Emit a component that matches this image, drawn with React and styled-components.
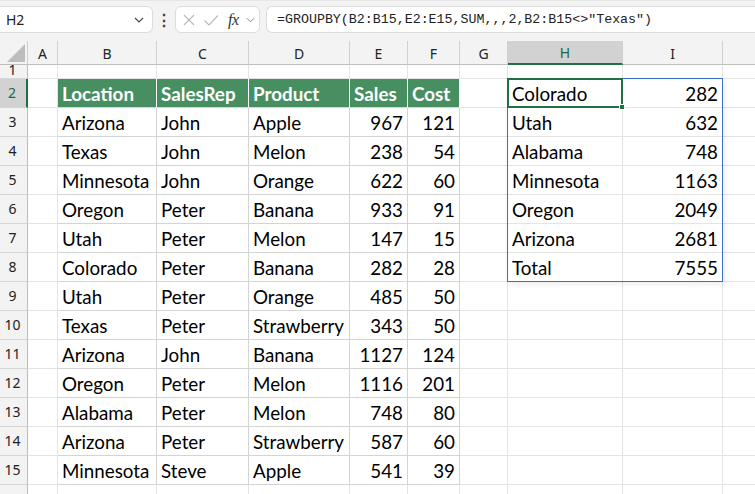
import React from 'react';
import styled, { createGlobalStyle } from 'styled-components';

const COLS = ['A', 'B', 'C', 'D', 'E', 'F', 'G', 'H', 'I', 'J'];
const WIDTHS = [30, 99, 92, 101, 58, 52, 48, 115, 100, 40];
const HEAD_W = 28;
const ROW_H = 29;
const ROW1_H = 14;

const header = ['Location', 'SalesRep', 'Product', 'Sales', 'Cost'];
const rows = [
    ['Arizona', 'John', 'Apple', 967, 121],
    ['Texas', 'John', 'Melon', 238, 54],
    ['Minnesota', 'John', 'Orange', 622, 60],
    ['Oregon', 'Peter', 'Banana', 933, 91],
    ['Utah', 'Peter', 'Melon', 147, 15],
    ['Colorado', 'Peter', 'Banana', 282, 28],
    ['Utah', 'Peter', 'Orange', 485, 50],
    ['Texas', 'Peter', 'Strawberry', 343, 50],
    ['Arizona', 'John', 'Banana', 1127, 124],
    ['Oregon', 'Peter', 'Melon', 1116, 201],
    ['Alabama', 'Peter', 'Melon', 748, 80],
    ['Arizona', 'Peter', 'Strawberry', 587, 60],
    ['Minnesota', 'Steve', 'Apple', 541, 39],
];
const spill = [
    ['Colorado', 282],
    ['Utah', 632],
    ['Alabama', 748],
    ['Minnesota', 1163],
    ['Oregon', 2049],
    ['Arizona', 2681],
    ['Total', 7555],
];

// build a map of cell values: key like "B3"
const cells = {};
header.forEach((h, i) => {
    cells[COLS[i + 1] + 2] = { v: h, head: true };
});
rows.forEach((r, ri) => {
    r.forEach((v, ci) => {
        cells[COLS[ci + 1] + (ri + 3)] = { v, num: typeof v === 'number' };
    });
});
spill.forEach((r, ri) => {
    cells['H' + (ri + 2)] = { v: r[0] };
    cells['I' + (ri + 2)] = { v: r[1], num: true };
});

const colLeft = (idx) => HEAD_W + WIDTHS.slice(0, idx).reduce((a, b) => a + b, 0);

export default function App() {
    const rowNums = Array.from({ length: 16 }, (_, i) => i + 1);
    const spillTop = 24 + ROW1_H;
    return (
        <>
            <GlobalStyle />
            <Page>
                <FormulaBar>
                    <NameBox>
                        <span>H2</span>
                        <Chevron viewBox="0 0 10 6">
                            <path d="M1 1 L5 5 L9 1" fill="none" stroke="#444" strokeWidth="1.1" />
                        </Chevron>
                    </NameBox>
                    <Dots>⋮</Dots>
                    <FxBox>
                        <svg width="14" height="14" viewBox="0 0 14 14">
                            <path d="M2 2 L12 12 M12 2 L2 12" stroke="#b8b8b8" strokeWidth="1.1" />
                        </svg>
                        <svg width="16" height="14" viewBox="0 0 16 14">
                            <path d="M1.5 7.5 L6 12 L15 2.5" fill="none" stroke="#b8b8b8" strokeWidth="1.1" />
                        </svg>
                        <Fx>fx</Fx>
                        <Chevron viewBox="0 0 10 6" style={{ width: 9 }}>
                            <path d="M1 1 L5 5 L9 1" fill="none" stroke="#777" strokeWidth="1" />
                        </Chevron>
                    </FxBox>
                    <FormulaInput>=GROUPBY(B2:B15,E2:E15,SUM,,,2,B2:B15&lt;&gt;"Texas")</FormulaInput>
                </FormulaBar>

                <SheetWrap>
                    <Sheet>
                        <Corner>
                            <svg width="18" height="18" viewBox="0 0 18 18">
                                <path d="M18 0 L18 18 L0 18 Z" fill="#bdbdbd" />
                            </svg>
                        </Corner>
                        {COLS.map((c) => (
                            <ColHead key={c} $active={c === 'H'}>
                                {c === 'J' ? '' : c}
                            </ColHead>
                        ))}
                        {rowNums.map((r) => (
                            <React.Fragment key={r}>
                                <RowHead $active={r === 2} $short={r === 1}>
                                    <span>{r}</span>
                                </RowHead>
                                {COLS.map((c) => {
                                    const cell = cells[c + r];
                                    const inTable =
                                        r >= 2 && r <= 15 && ['B', 'C', 'D', 'E', 'F'].includes(c);
                                    return (
                                        <Cell
                                            key={c}
                                            $head={cell && cell.head}
                                            $num={cell && cell.num}
                                            $table={inTable}
                                        >
                                            {cell ? cell.v : ''}
                                        </Cell>
                                    );
                                })}
                            </React.Fragment>
                        ))}
                    </Sheet>
                    <SpillBorder
                        style={{
                            left: colLeft(7) - 1,
                            top: spillTop - 1,
                            width: WIDTHS[7] + WIDTHS[8] + 1,
                            height: ROW_H * 7 + 1,
                        }}
                    />
                    <ActiveCell
                        style={{
                            left: colLeft(7) - 1,
                            top: spillTop - 1,
                            width: WIDTHS[7] + 1,
                            height: ROW_H + 1,
                        }}
                    >
                        <Handle />
                    </ActiveCell>
                </SheetWrap>
            </Page>
        </>
    );
}

const GlobalStyle = createGlobalStyle`
    html, body {
        margin: 0;
        padding: 0;
        background: #fff;
        overflow: hidden;
    }
    * {
        box-sizing: border-box;
    }
`;

const Page = styled.div`
    width: 755px;
    height: 494px;
    overflow: hidden;
    background: #fff;
`;

const FormulaBar = styled.div`
    height: 41px;
    background: #f3f3f3;
    border-top: 1px solid #e6e6e6;
    display: flex;
    align-items: center;
    padding: 0 0 3px 0;
    font-family: 'Noto Sans', 'Open Sans', sans-serif;
`;

const NameBox = styled.div`
    width: 153px;
    height: 27px;
    background: #fff;
    border: 1px solid #dcdcdc;
    border-left: none;
    border-radius: 0 6px 6px 0;
    display: flex;
    align-items: center;
    justify-content: space-between;
    padding: 0 8px 0 6px;
    font-size: 14px;
    color: #222;
`;

const Chevron = styled.svg`
    width: 10px;
    height: 6px;
`;

const Dots = styled.div`
    width: 22px;
    text-align: center;
    font-size: 16px;
    font-weight: bold;
    color: #444;
`;

const FxBox = styled.div`
    width: 85px;
    height: 27px;
    background: #fff;
    border: 1px solid #dcdcdc;
    border-radius: 6px;
    display: flex;
    align-items: center;
    padding: 0 4px 0 6px;
    gap: 7px;
`;

const Fx = styled.span`
    font-family: 'Liberation Serif', 'DejaVu Serif', serif;
    font-style: italic;
    font-size: 16px;
    color: #333;
    margin-left: 2px;
    letter-spacing: -0.5px;
`;

const FormulaInput = styled.div`
    flex: 1;
    height: 27px;
    margin-left: 6px;
    background: #fff;
    border: 1px solid #dcdcdc;
    border-right: none;
    border-radius: 6px 0 0 6px;
    display: flex;
    align-items: center;
    padding-left: 10px;
    font-family: 'Liberation Mono', 'DejaVu Sans Mono', monospace;
    font-size: 13.3px;
    color: #222;
    white-space: nowrap;
`;

const SheetWrap = styled.div`
    position: relative;
`;

const Sheet = styled.div`
    display: grid;
    grid-template-columns: ${HEAD_W}px ${WIDTHS.map((w) => w + 'px').join(' ')};
    grid-template-rows: 24px ${ROW1_H}px;
    grid-auto-rows: ${ROW_H}px;
`;

const Corner = styled.div`
    background: #f3f3f3;
    border-right: 1px solid #d0d0d0;
    border-bottom: 1px solid #bdbdbd;
    display: flex;
    align-items: flex-end;
    justify-content: flex-end;
    padding: 0 2px 2px 0;
`;

const ColHead = styled.div`
    background: ${(p) => (p.$active ? '#d2d2d2' : '#f3f3f3')};
    color: ${(p) => (p.$active ? '#1c6b3c' : '#222')};
    border-right: 1px solid #d0d0d0;
    border-bottom: ${(p) => (p.$active ? '2px solid #1e7145' : '1px solid #bdbdbd')};
    display: flex;
    align-items: center;
    justify-content: center;
    font-family: 'Noto Sans', 'Open Sans', sans-serif;
    font-size: 14px;
    padding-top: 1px;
`;

const RowHead = styled.div`
    background: ${(p) => (p.$active ? '#d2d2d2' : '#f3f3f3')};
    color: ${(p) => (p.$active ? '#1c6b3c' : '#222')};
    border-right: ${(p) => (p.$active ? '2px solid #1e7145' : '1px solid #bdbdbd')};
    border-bottom: 1px solid #d6d6d6;
    display: flex;
    align-items: ${(p) => (p.$short ? 'flex-end' : 'center')};
    justify-content: center;
    overflow: hidden;
    font-family: 'Noto Sans', 'Open Sans', sans-serif;
    font-size: 14px;
    line-height: 1;
    padding-right: 2px;
    > span {
        margin-bottom: ${(p) => (p.$short ? '1px' : '0')};
    }
`;

const Cell = styled.div`
    background: ${(p) => (p.$head ? '#478f61' : '#fff')};
    color: ${(p) => (p.$head ? '#fff' : '#000')};
    font-weight: ${(p) => (p.$head ? 700 : 400)};
    border-right: 1px solid
        ${(p) => (p.$head ? '#ffffff' : p.$table ? '#d4d4d4' : '#e4e4e4')};
    border-bottom: 1px solid ${(p) => (p.$table ? '#d4d4d4' : '#e4e4e4')};
    display: flex;
    align-items: center;
    justify-content: ${(p) => (p.$num ? 'flex-end' : 'flex-start')};
    padding: 0 4px;
    overflow: hidden;
    white-space: nowrap;
    font-family: 'Lato', 'Liberation Sans', sans-serif;
    font-size: 18.8px;
`;

const SpillBorder = styled.div`
    position: absolute;
    border: 1px solid #3b6fc6;
    box-shadow: 2px 2px 6px rgba(0, 0, 0, 0.08);
    pointer-events: none;
`;

const ActiveCell = styled.div`
    position: absolute;
    border: 2px solid #1e7145;
    pointer-events: none;
`;

const Handle = styled.div`
    position: absolute;
    right: -4px;
    bottom: -4px;
    width: 6px;
    height: 6px;
    background: #1e7145;
    border: 1px solid #fff;
`;
